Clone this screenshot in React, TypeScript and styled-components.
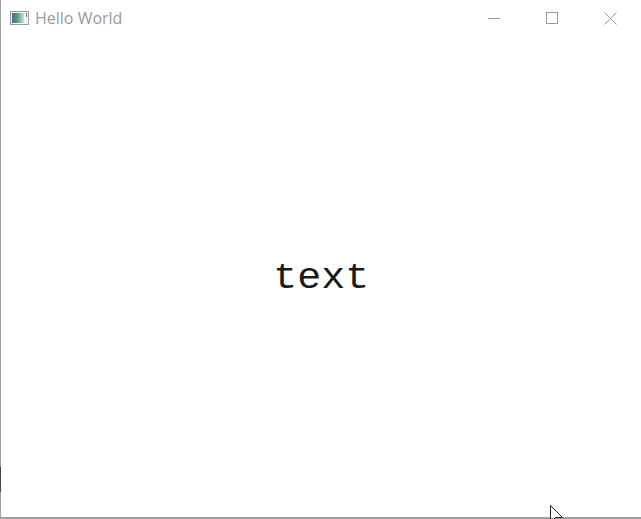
import React from 'react';
import styled, { createGlobalStyle } from 'styled-components';

const GlobalStyle = createGlobalStyle`
  html, body {
    margin: 0;
    padding: 0;
    background: #fff;
    overflow: hidden;
  }
`;

const Window = styled.div`
  position: relative;
  box-sizing: border-box;
  width: 641px;
  height: 519px;
  display: flex;
  flex-direction: column;
  background: #fff;
  border-left: 1px solid #a0a0a0;
  border-bottom: 2px solid #a0a0a0;
`;

const TitleBar = styled.div`
  height: 36px;
  display: flex;
  align-items: center;
  padding-left: 9px;
`;

const AppIcon = styled.svg`
  width: 19px;
  height: 14px;
  margin-right: 6px;
`;

const Title = styled.span`
  flex: 1;
  font-family: 'Open Sans', 'Noto Sans', sans-serif;
  font-size: 16px;
  color: #9a9a9a;
`;

const Controls = styled.div`
  display: flex;
  margin-right: 1px;
`;

const ControlButton = styled.div`
  width: 58.5px;
  height: 36px;
  display: flex;
  align-items: center;
  justify-content: center;
`;

const ControlIcon = styled.svg`
  width: 13px;
  height: 13px;
  stroke: #999;
  fill: none;
  overflow: visible;
`;

const Content = styled.main`
  flex: 1;
  display: flex;
  align-items: center;
  justify-content: center;
  padding-top: 4px;
`;

const Label = styled.span`
  display: inline-block;
  font-family: 'Liberation Mono', monospace;
  font-size: 36px;
  line-height: 46px;
  color: #1a1a1a;
  transform: scaleX(1.11);
`;

const EdgeMark = styled.div`
  position: absolute;
  left: -1px;
  top: 467px;
  width: 1px;
  height: 25px;
  background: #444;
`;

const Cursor = styled.svg`
  position: absolute;
  left: 547px;
  top: 504px;
  width: 16px;
  height: 15px;
`;

export default function App() {
  return (
    <>
      <GlobalStyle />
      <Window>
        <TitleBar>
          <AppIcon viewBox="0 0 19 14">
            <defs>
              <linearGradient id="appIconFill" x1="0" x2="1" y1="0" y2="0">
                <stop offset="0" stopColor="#3d6f80" />
                <stop offset="0.5" stopColor="#5f9f90" />
                <stop offset="1" stopColor="#cfe3da" />
              </linearGradient>
            </defs>
            <rect x="0.5" y="0.5" width="18" height="13" fill="#f4f4f4" stroke="#9a9a9a" />
            <rect x="2" y="2" width="12" height="10" fill="url(#appIconFill)" />
            <rect x="16" y="2" width="1" height="4" fill="#5d7f8a" />
          </AppIcon>
          <Title>Hello World</Title>
          <Controls>
            <ControlButton>
              <ControlIcon viewBox="0 0 13 13">
                <path d="M1 6.5H13" />
              </ControlIcon>
            </ControlButton>
            <ControlButton>
              <ControlIcon viewBox="0 0 13 13">
                <rect x="0.5" y="0.5" width="11" height="11" />
              </ControlIcon>
            </ControlButton>
            <ControlButton>
              <ControlIcon viewBox="0 0 13 13">
                <path d="M0.5 0.5L12.5 12.5M12.5 0.5L0.5 12.5" />
              </ControlIcon>
            </ControlButton>
          </Controls>
        </TitleBar>
        <Content>
          <Label>text</Label>
        </Content>
        <EdgeMark />
        <Cursor viewBox="0 0 16 15">
          <path d="M2.5 1.5V15H5.5L8 13.5H14.5Z" fill="#fff" stroke="#222" />
        </Cursor>
      </Window>
    </>
  );
}
